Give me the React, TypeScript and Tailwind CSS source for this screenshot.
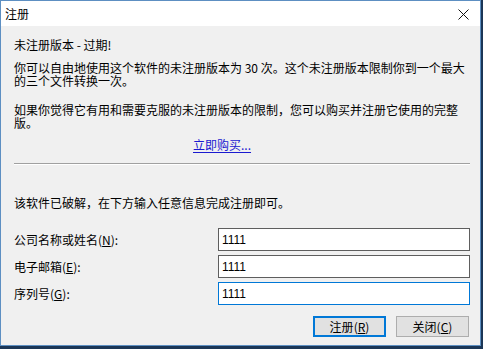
const cjk = "font-['Noto_Sans_CJK_SC',sans-serif]"

const Hot = ({ k }: { k: string }) => (
  <>
    (<span className="underline underline-offset-1">{k}</span>)
  </>
)

const Field = ({ label, k, focused }: { label: string; k: string; focused?: boolean }) => (
  <div className="flex items-center">
    <div className="flex-1 leading-[13px]">
      {label}
      <Hot k={k} />:
    </div>
    <div
      className={
        "flex h-[23px] w-[252px] items-center bg-white pl-[3px] font-['Liberation_Sans',sans-serif] text-[12px] " +
        (focused ? "border border-[#0078d7]" : "border border-[#5e5e5e]")
      }
    >
      1111
    </div>
  </div>
)

export default function App() {
  return (
    <div className={`h-[349px] w-[483px] overflow-hidden bg-[#1b3656] text-[12px] text-black ${cjk}`}>
      <div className="flex h-[346px] w-[481px] flex-col border border-[#5d8fc2] bg-[#f0f0f0]">
        <div className="flex h-[25px] items-center justify-between bg-white pl-[4px] pr-[11px]">
          <span className="leading-[13px]">注册</span>
          <svg width="11" height="11" viewBox="0 0 11 11" className="mt-[2px]">
            <path d="M0.5 0.5L10.5 10.5M10.5 0.5L0.5 10.5" stroke="#111" strokeWidth="1" />
          </svg>
        </div>

        <div className="flex flex-1 flex-col pl-[13px] pr-[10px]">
          <div className="mt-[12px] leading-[13px]">未注册版本 - 过期!</div>

          <p className="mt-[10px] leading-[13px]">
            你可以自由地使用这个软件的未注册版本为 30 次。这个未注册版本限制你到一个最大
            <br />
            的三个文件转换一次。
          </p>

          <p className="mt-[16px] leading-[13px]">
            如果你觉得它有用和需要克服的未注册版本的限制，您可以购买并注册它使用的完整
            <br />
            版。
          </p>

          <div className="mt-[9px] pl-[179px] leading-[13px]">
            <a href="#" className="text-[#1a1ad0] underline underline-offset-2">
              立即购买...
            </a>
          </div>

          <div className="mt-[12px] h-[1px] bg-[#a0a0a0]" />
          <div className="h-[1px] bg-white" />

          <div className="mt-[31px] leading-[13px]">该软件已破解，在下方输入任意信息完成注册即可。</div>

          <div className="mt-[19px] flex flex-col gap-[4px]">
            <Field label="公司名称或姓名" k="N" />
            <Field label="电子邮箱" k="E" />
            <Field label="序列号" k="G" focused />
          </div>

          <div className="mt-[11px] flex justify-end gap-[10px] pr-[1px]">
            <button className="flex h-[21px] w-[73px] items-center justify-center border-2 border-[#0078d7] bg-[#e1e1e1] leading-[13px]">
              注册<Hot k="R" />
            </button>
            <button className="flex h-[21px] w-[73px] items-center justify-center border border-[#adadad] bg-[#e1e1e1] leading-[13px]">
              关闭<Hot k="C" />
            </button>
          </div>
        </div>
      </div>
    </div>
  )
}
